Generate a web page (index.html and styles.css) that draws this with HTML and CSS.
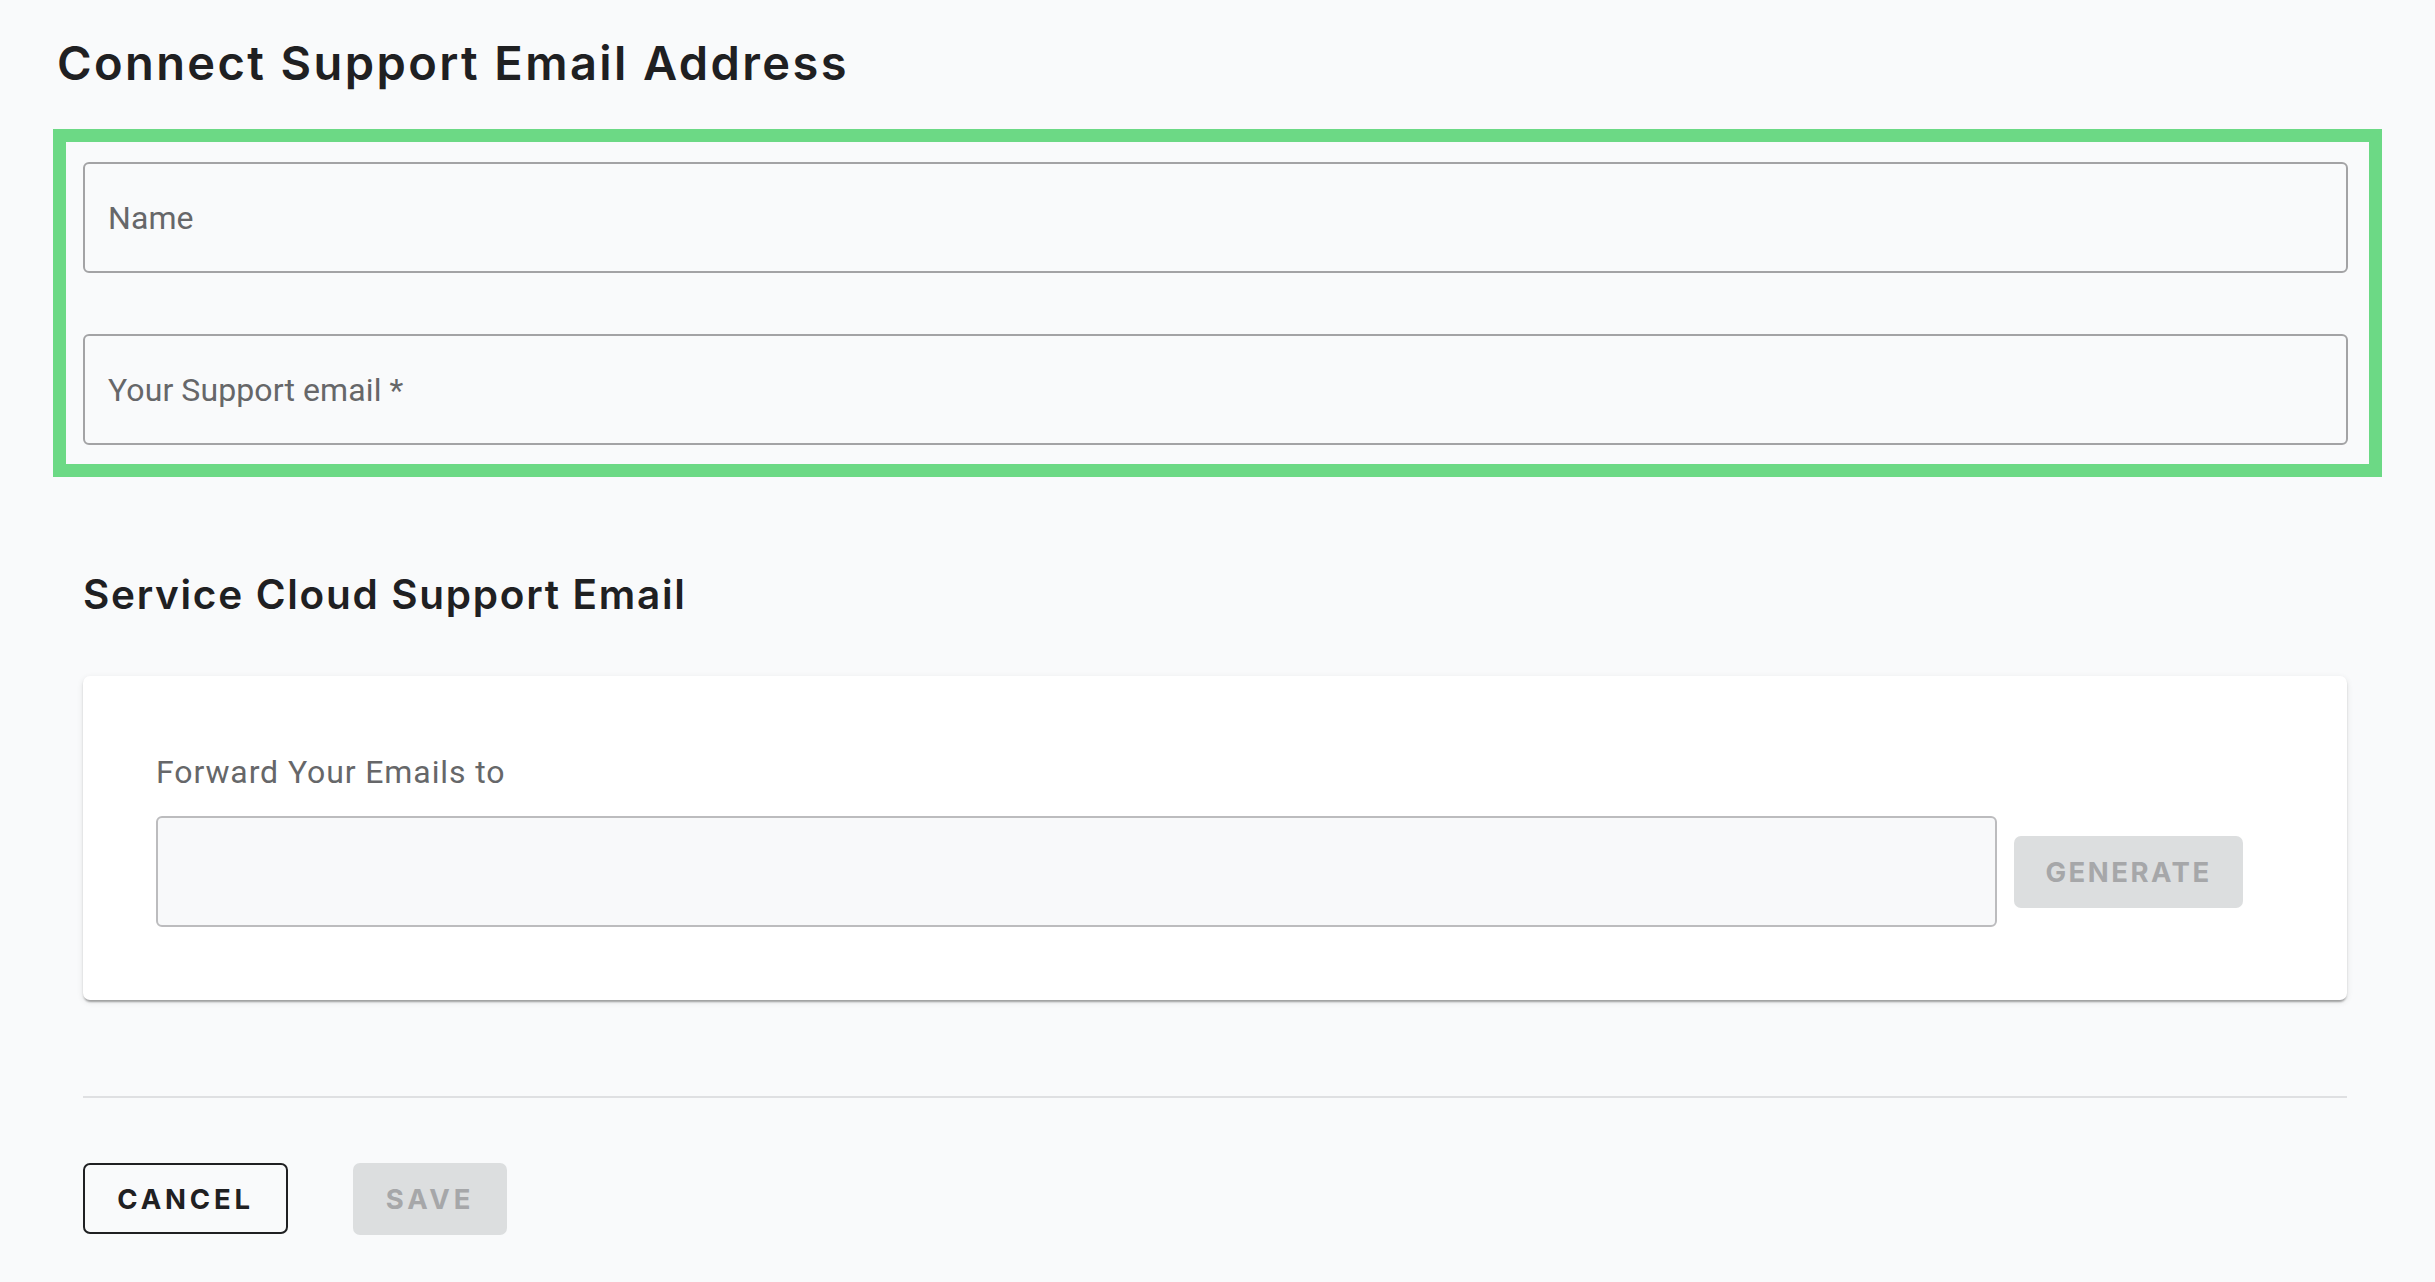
FILE: index.html
```html
<!DOCTYPE html>
<html lang="en">
<head>
<meta charset="utf-8">
<title>Connect Support Email Address</title>
<link rel="stylesheet" href="styles.css">
</head>
<body>
<main class="page">
  <h1 class="page-title">Connect Support Email Address</h1>
  <div class="content">
    <div class="highlight">
      <div class="field"><span class="field-label">Name</span></div>
      <div class="field"><span class="field-label">Your Support email *</span></div>
    </div>

    <h2 class="section-title">Service Cloud Support Email</h2>

    <section class="card">
      <div class="card-label">Forward Your Emails to</div>
      <div class="card-row">
        <div class="field field-light"></div>
        <button class="btn btn-disabled btn-generate" type="button">GENERATE</button>
      </div>
    </section>

    <hr class="divider">

    <div class="actions">
      <button class="btn btn-outline" type="button">CANCEL</button>
      <button class="btn btn-disabled btn-save" type="button">SAVE</button>
    </div>
  </div>
</main>
</body>
</html>
```

FILE: styles.css
```css
html, body {
  margin: 0;
  padding: 0;
  background: #f9fafb;
}

.page {
  padding: 0 0 0 57px;
  width: 2378px;
  box-sizing: border-box;
  font-family: "Roboto", "Liberation Sans", sans-serif;
}

.page-title {
  margin: 0;
  padding-top: 34px;
  font-family: "Inter", "Liberation Sans", sans-serif;
  font-weight: 600;
  font-size: 47px;
  line-height: 57px;
  color: #1f2022;
  letter-spacing: 2.4px;
}

.content {
  margin-left: 26px;
  width: 2264px;
}

.highlight {
  margin: 38px -35px 0 -30px;
  border: 13px solid #6cd985;
  padding: 20px 21px 19px 17px;
  display: flex;
  flex-direction: column;
  gap: 61px;
}

.field {
  height: 111px;
  box-sizing: border-box;
  border: 2px solid #a3a3a5;
  border-radius: 6px;
  background: #f9fafb;
  display: flex;
  align-items: center;
  padding-left: 23px;
}

.field-label {
  font-size: 32px;
  color: #666769;
  letter-spacing: 0.1px;
}

.section-title {
  margin: 0;
  padding-top: 93px;
  font-family: "Inter", "Liberation Sans", sans-serif;
  font-weight: 600;
  font-size: 40.5px;
  line-height: 50px;
  color: #1f2022;
  letter-spacing: 1.7px;
}

.card {
  margin-top: 56px;
  background: #ffffff;
  border-radius: 7px;
  box-shadow: 0 4px 2px -2px rgba(0,0,0,0.2), 0 2px 2px 0 rgba(0,0,0,0.14), 0 2px 6px 0 rgba(0,0,0,0.10);
  padding: 77px 104px 73px 73px;
  height: 324px;
  box-sizing: border-box;
}

.card-label {
  font-size: 32px;
  line-height: 38px;
  color: #666769;
  letter-spacing: 0.9px;
}

.card-row {
  margin-top: 25px;
  display: flex;
  align-items: center;
  gap: 17px;
}

.field-light {
  flex: 1;
  border-color: #bcbcbe;
  background: #f8f9fa;
}

.btn {
  font-family: "Inter", "Liberation Sans", sans-serif;
  font-weight: 700;
  font-size: 27.5px;
  letter-spacing: 3.8px;
  border-radius: 7px;
  box-sizing: border-box;
  height: 72px;
  display: inline-flex;
  align-items: center;
  justify-content: center;
  padding: 0;
  cursor: default;
}

.btn-disabled {
  background: #dcdedf;
  color: #a6a7a9;
  border: none;
}

.btn-generate {
  width: 229px;
  letter-spacing: 2.5px;
}

.divider {
  margin: 96px 0 0 0;
  border: none;
  height: 2px;
  background: #dfe0e2;
}

.actions {
  margin-top: 65px;
  display: flex;
  gap: 65px;
}

.btn-outline {
  width: 205px;
  height: 71px;
  background: transparent;
  border: 2px solid #1f2022;
  color: #1f2022;
}

.btn-save {
  width: 154px;
  height: 72px;
}
```
